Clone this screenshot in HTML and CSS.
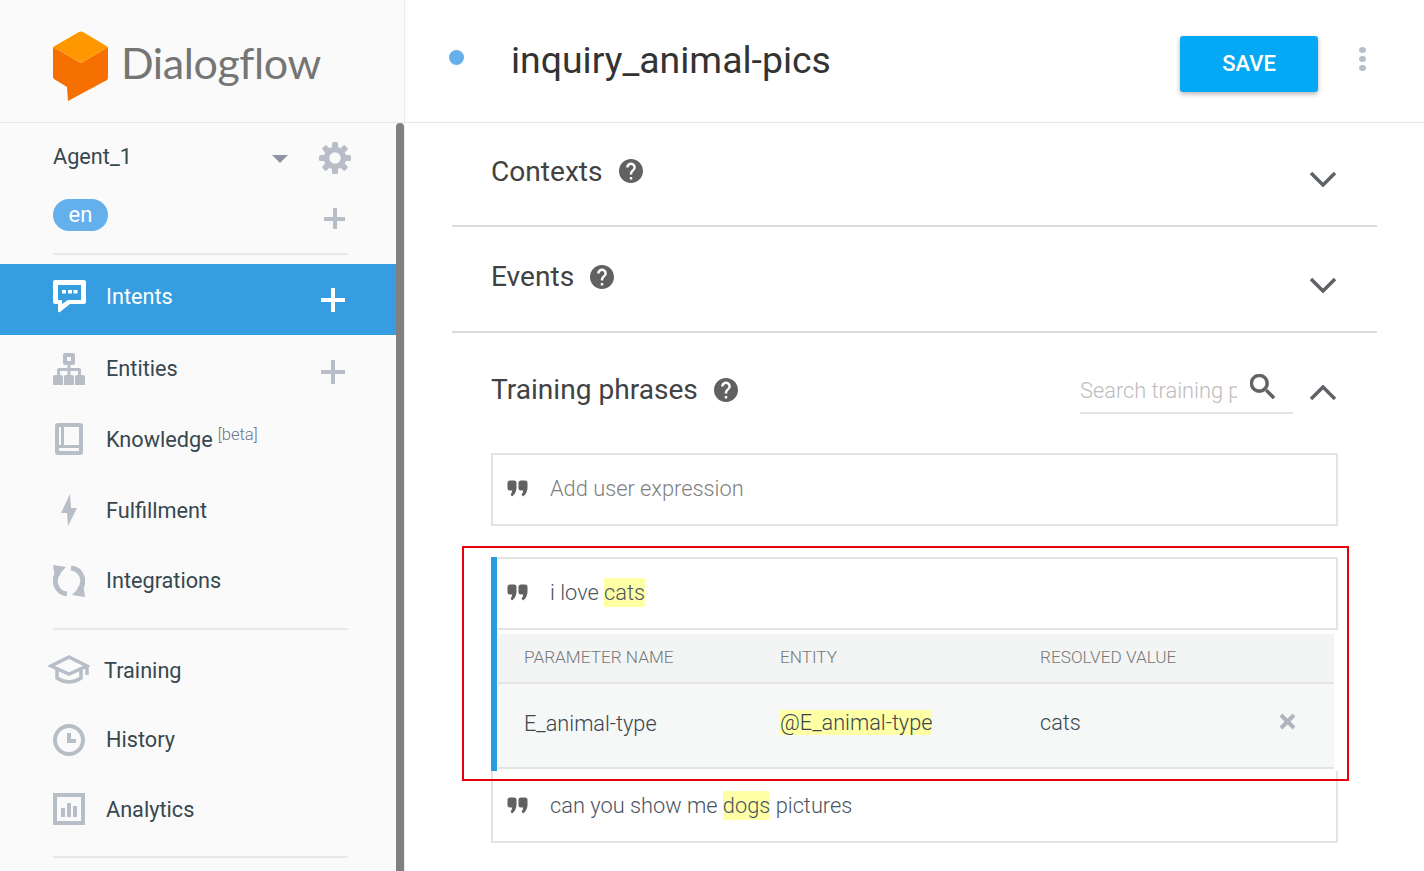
FILE: index.html
```html
<!DOCTYPE html>
<html lang="en">
<head>
    <meta charset="UTF-8">
    <meta name="viewport" content="width=device-width, initial-scale=1.0">
    <title>Dialogflow - inquiry_animal-pics</title>
    <link rel="stylesheet" href="styles.css">
</head>
<body>
    <aside class="sidebar">
        <div class="logo">
            <svg class="logo-mark" width="56" height="71" viewBox="0 0 56 71">
                <path fill="#f57000" d="M0 16 L28 32 L55 16 V47 Q55 48 54 49 L15 70 L14 56 L1 48 Q0 47 0 46 Z"/>
                <path fill="#ff9800" d="M26 1 Q28 0 30 1 L55 16 L28 32 L0 16 Z"/>
            </svg>
            <span class="logo-text">Dialogflow</span>
        </div>
        <div class="side-body">
            <div class="side-content">
                <div class="agent-row">
                    <span class="agent-name">Agent_1</span>
                    <span class="caret"></span>
                    <svg class="gear" width="32" height="32" viewBox="0 0 32 32">
                        <circle cx="16" cy="16" r="8.5"/>
                        <rect x="13" y="0" width="6" height="8" rx="1.5"/>
                        <rect x="13" y="0" width="6" height="8" rx="1.5" transform="rotate(45 16 16)"/>
                        <rect x="13" y="0" width="6" height="8" rx="1.5" transform="rotate(90 16 16)"/>
                        <rect x="13" y="0" width="6" height="8" rx="1.5" transform="rotate(135 16 16)"/>
                        <rect x="13" y="0" width="6" height="8" rx="1.5" transform="rotate(180 16 16)"/>
                        <rect x="13" y="0" width="6" height="8" rx="1.5" transform="rotate(225 16 16)"/>
                        <rect x="13" y="0" width="6" height="8" rx="1.5" transform="rotate(270 16 16)"/>
                        <rect x="13" y="0" width="6" height="8" rx="1.5" transform="rotate(315 16 16)"/>
                    </svg>
                </div>
                <div class="lang-row">
                    <span class="lang-pill">en</span>
                    <span class="plus plus-small"></span>
                </div>
                <div class="side-divider"></div>
                <nav class="nav">
                    <a class="nav-item active">
                        <svg class="nav-icon" width="33" height="33" viewBox="0 0 33 33"><path fill-rule="evenodd" d="M2 0 H31 Q33 0 33 2 V22 Q33 24 31 24 H17 L7 32 Q5 33 5 31 V24 H2 Q0 24 0 22 V2 Q0 0 2 0 Z M5 5 V20 H9 V24 L15 20 H28 V5 Z"/><rect x="9" y="10" width="4" height="3.5"/><rect x="15" y="10" width="4" height="3.5"/><rect x="20.5" y="10" width="4" height="3.5"/></svg>
                        <span>Intents</span>
                        <span class="plus"></span>
                    </a>
                    <a class="nav-item">
                        <svg class="nav-icon" width="32" height="32" viewBox="0 0 32 32"><path fill-rule="evenodd" d="M12 0 H20 Q22 0 22 2 V10 Q22 12 20 12 H17.5 V15 H26 Q28 15 28 17 V22 H30 Q32 22 32 24 V32 H22 V24 Q22 22 24 22 H25 V18 H17.5 V22 H19 Q21 22 21 24 V32 H11 V24 Q11 22 13 22 H14.5 V18 H7 V22 H8 Q10 22 10 24 V32 H0 V24 Q0 22 2 22 H4 V17 Q4 15 6 15 H14.5 V12 H12 Q10 12 10 10 V2 Q10 0 12 0 Z M14 4 V8 H18 V4 Z"/></svg>
                        <span>Entities</span>
                        <span class="plus"></span>
                    </a>
                    <a class="nav-item">
                        <svg class="nav-icon" width="32" height="32" viewBox="0 0 32 32"><path fill-rule="evenodd" d="M5 0 H27 Q30 0 30 3 V29 Q30 32 27 32 H5 Q2 32 2 29 V3 Q2 0 5 0 Z M6 4 V22 H8 V4 Z M11 4 V22 H26 V4 Z M6 25 V28 H26 V25 Z"/></svg>
                        <span>Knowledge</span><sup class="beta">[beta]</sup>
                    </a>
                    <a class="nav-item">
                        <svg class="nav-icon" width="32" height="32" viewBox="0 0 32 32"><path d="M17 0 L8 19 H14 L15 32 L24 14 H18 Z"/></svg>
                        <span>Fulfillment</span>
                    </a>
                    <a class="nav-item">
                        <svg class="nav-icon sync" width="32" height="32" viewBox="0 0 32 32"><path d="M6 7 A13 13 0 0 0 14 29"/><path d="M18 3 A13 13 0 0 1 26 25"/><path class="solid" d="M0 0 L13 2 L2 14 Z"/><path class="solid" d="M32 32 L19 30 L30 18 Z"/></svg>
                        <span>Integrations</span>
                    </a>
                </nav>
                <div class="side-divider divider-mid"></div>
                <nav class="nav nav-tools">
                    <a class="nav-item training">
                        <svg class="nav-icon hat" width="42" height="30" viewBox="0 0 42 30"><path d="M21 2 L39 11 L21 19 L3 11 Z"/><path d="M9 15 V23 Q21 31 33 23 V15"/><path d="M39 11 V20"/></svg>
                        <span>Training</span>
                    </a>
                    <a class="nav-item">
                        <svg class="nav-icon clock" width="32" height="32" viewBox="0 0 32 32"><circle cx="16" cy="16" r="14"/><path d="M16 9 V17 H23"/></svg>
                        <span>History</span>
                    </a>
                    <a class="nav-item">
                        <svg class="nav-icon" width="32" height="32" viewBox="0 0 32 32"><path fill-rule="evenodd" d="M0 0 H32 V32 H0 Z M4 4 V28 H28 V4 Z"/><rect x="8" y="15" width="4" height="9"/><rect x="14" y="10" width="4" height="14"/><rect x="20" y="13" width="4" height="11"/></svg>
                        <span>Analytics</span>
                    </a>
                </nav>
                <div class="side-divider divider-end"></div>
            </div>
            <div class="scrollbar"></div>
        </div>
    </aside>

    <main class="main">
        <header class="topbar">
            <span class="status-dot"></span>
            <h1>inquiry_animal-pics</h1>
            <button class="save" type="button">SAVE</button>
            <div class="more"><i></i><i></i><i></i></div>
        </header>

        <div class="content">
            <section class="section">
                <h2>Contexts</h2>
                <svg class="help" width="24" height="24" viewBox="2 2 20 20"><path d="M12 2C6.48 2 2 6.48 2 12s4.48 10 10 10 10-4.48 10-10S17.52 2 12 2zm1 17h-2v-2h2v2zm2.07-7.75l-.9.92C13.45 12.9 13 13.5 13 15h-2v-.5c0-1.1.45-2.1 1.17-2.83l1.24-1.26c.37-.36.59-.86.59-1.41 0-1.1-.9-2-2-2s-2 .9-2 2H8c0-2.21 1.79-4 4-4s4 1.79 4 4c0 .88-.36 1.68-.93 2.25z"/></svg>
                <svg class="chevron" width="28" height="16" viewBox="0 0 28 16"><path d="M2 2 L14 14 L26 2"/></svg>
            </section>
            <section class="section section-events">
                <h2>Events</h2>
                <svg class="help" width="24" height="24" viewBox="2 2 20 20"><path d="M12 2C6.48 2 2 6.48 2 12s4.48 10 10 10 10-4.48 10-10S17.52 2 12 2zm1 17h-2v-2h2v2zm2.07-7.75l-.9.92C13.45 12.9 13 13.5 13 15h-2v-.5c0-1.1.45-2.1 1.17-2.83l1.24-1.26c.37-.36.59-.86.59-1.41 0-1.1-.9-2-2-2s-2 .9-2 2H8c0-2.21 1.79-4 4-4s4 1.79 4 4c0 .88-.36 1.68-.93 2.25z"/></svg>
                <svg class="chevron" width="28" height="16" viewBox="0 0 28 16"><path d="M2 2 L14 14 L26 2"/></svg>
            </section>

            <section class="training-section">
                <div class="training-head">
                    <h2>Training phrases</h2>
                    <svg class="help" width="24" height="24" viewBox="2 2 20 20"><path d="M12 2C6.48 2 2 6.48 2 12s4.48 10 10 10 10-4.48 10-10S17.52 2 12 2zm1 17h-2v-2h2v2zm2.07-7.75l-.9.92C13.45 12.9 13 13.5 13 15h-2v-.5c0-1.1.45-2.1 1.17-2.83l1.24-1.26c.37-.36.59-.86.59-1.41 0-1.1-.9-2-2-2s-2 .9-2 2H8c0-2.21 1.79-4 4-4s4 1.79 4 4c0 .88-.36 1.68-.93 2.25z"/></svg>
                    <div class="search">
                        <span class="search-text">Search training phrases</span>
                        <svg class="search-icon" width="25" height="25" viewBox="3 3 17.5 17.5"><path d="M15.5 14h-.79l-.28-.27C15.41 12.59 16 11.11 16 9.5 16 5.91 13.09 3 9.5 3S3 5.91 3 9.5 5.91 16 9.5 16c1.61 0 3.09-.59 4.23-1.57l.27.28v.79l5 4.99L20.49 19l-4.99-5zm-6 0C7.01 14 5 11.99 5 9.5S7.01 5 9.5 5 14 7.01 14 9.5 11.99 14 9.5 14z"/></svg>
                    </div>
                    <svg class="chevron chevron-up" width="28" height="16" viewBox="0 0 28 16"><path d="M2 14 L14 2 L26 14"/></svg>
                </div>

                <div class="phrase add-phrase">
                    <svg class="quote" width="21" height="17" viewBox="0 0 21 17"><path d="M0.5 3 Q0.5 0.5 3 0.5 H7 Q9.5 0.5 9.5 3 V8 Q9.5 13 5 16.5 L3.5 14.5 Q5 13 5.2 10.5 H3 Q0.5 10.5 0.5 8 Z M11.5 3 Q11.5 0.5 14 0.5 H18 Q20.5 0.5 20.5 3 V8 Q20.5 13 16 16.5 L14.5 14.5 Q16 13 16.2 10.5 H14 Q11.5 10.5 11.5 8 Z"/></svg>
                    <span class="placeholder">Add user expression</span>
                </div>

                <div class="phrase-group">
                    <div class="phrase-selected">
                        <svg class="quote" width="21" height="17" viewBox="0 0 21 17"><path d="M0.5 3 Q0.5 0.5 3 0.5 H7 Q9.5 0.5 9.5 3 V8 Q9.5 13 5 16.5 L3.5 14.5 Q5 13 5.2 10.5 H3 Q0.5 10.5 0.5 8 Z M11.5 3 Q11.5 0.5 14 0.5 H18 Q20.5 0.5 20.5 3 V8 Q20.5 13 16 16.5 L14.5 14.5 Q16 13 16.2 10.5 H14 Q11.5 10.5 11.5 8 Z"/></svg>
                        <span class="phrase-text">i love <mark>cats</mark></span>
                    </div>
                    <div class="params">
                        <div class="params-row params-head">
                            <span>PARAMETER NAME</span>
                            <span>ENTITY</span>
                            <span>RESOLVED VALUE</span>
                        </div>
                        <div class="params-row params-body">
                            <span class="param-name">E_animal-type</span>
                            <span class="param-entity"><mark>@E_animal-type</mark></span>
                            <span class="param-value">cats</span>
                            <svg class="remove" width="19" height="19" viewBox="0 0 19 19"><path d="M3 3 L16 16 M16 3 L3 16"/></svg>
                        </div>
                    </div>
                </div>

                <div class="phrase last-phrase">
                    <svg class="quote" width="21" height="17" viewBox="0 0 21 17"><path d="M0.5 3 Q0.5 0.5 3 0.5 H7 Q9.5 0.5 9.5 3 V8 Q9.5 13 5 16.5 L3.5 14.5 Q5 13 5.2 10.5 H3 Q0.5 10.5 0.5 8 Z M11.5 3 Q11.5 0.5 14 0.5 H18 Q20.5 0.5 20.5 3 V8 Q20.5 13 16 16.5 L14.5 14.5 Q16 13 16.2 10.5 H14 Q11.5 10.5 11.5 8 Z"/></svg>
                    <span class="phrase-text">can you show me <mark>dogs</mark> pictures</span>
                </div>
            </section>
        </div>

        <!-- red box drawn over the screenshot -->
        <div class="callout"></div>
    </main>
</body>
</html>
```

FILE: styles.css
```css
* {
    box-sizing: border-box;
    margin: 0;
    padding: 0;
}

html,
body {
    height: 100%;
    overflow: hidden;
}

body {
    font-family: 'Roboto', 'Liberation Sans', sans-serif;
    display: flex;
    background: #fff;
    color: #37474f;
}

mark {
    background: #ffffa6;
    color: inherit;
}

/* Sidebar */
.sidebar {
    width: 405px;
    flex-shrink: 0;
    display: flex;
    flex-direction: column;
    background: #fafafa;
    border-right: 1px solid #ececec;
}

.logo {
    height: 123px;
    flex-shrink: 0;
    display: flex;
    align-items: flex-start;
    padding: 31px 0 0 53px;
    border-bottom: 1px solid #e6e6e6;
}

.logo-text {
    font-family: 'Lato', 'Roboto', sans-serif;
    font-size: 43px;
    line-height: 64px;
    letter-spacing: -0.4px;
    color: #757575;
    margin-left: 12px;
}

.side-body {
    flex: 1;
    display: flex;
    min-height: 0;
}

.side-content {
    width: 396px;
    flex-shrink: 0;
}

.scrollbar {
    width: 8px;
    background: #808080;
    border-radius: 4px 4px 0 0;
}

.agent-row {
    height: 67px;
    display: flex;
    align-items: center;
    padding: 0 45px 0 53px;
}

.agent-name {
    font-size: 21.7px;
    color: #37474f;
}

.caret {
    width: 0;
    height: 0;
    margin: 4px 31px 0 auto;
    border-left: 8px solid transparent;
    border-right: 8px solid transparent;
    border-top: 8px solid #8e94a6;
}

.gear {
    margin-top: 2px;
    fill: none;
    stroke: none;
}

.gear circle {
    stroke: #b8bec8;
    stroke-width: 5.5;
}

.gear rect {
    fill: #b8bec8;
}

.lang-row {
    height: 63px;
    display: flex;
    align-items: flex-start;
    justify-content: space-between;
    padding: 9px 51px 0 53px;
}

.lang-pill {
    width: 55px;
    height: 32px;
    border-radius: 16px;
    background: #64b0ec;
    color: #fff;
    font-size: 22px;
    line-height: 31px;
    text-align: center;
}

.plus {
    width: 24px;
    height: 24px;
    margin-left: auto;
    margin-right: 51px;
    margin-top: 6px;
    background:
        linear-gradient(#b8bec8, #b8bec8) center / 100% 4px no-repeat,
        linear-gradient(#b8bec8, #b8bec8) center / 4px 100% no-repeat;
}

.plus-small {
    width: 21px;
    height: 21px;
    margin: 9px 0 0 0;
}

.side-divider {
    height: 2px;
    margin: 0 48px 0 53px;
    background: #e8e8e8;
}

.divider-mid {
    margin-top: 11px;
}

.divider-end {
    margin-top: 12px;
}

.nav {
    display: flex;
    flex-direction: column;
}

.side-divider + .nav {
    margin-top: 9px;
}

.side-divider + .nav-tools {
    margin-top: 6px;
}

.nav-item {
    height: 70.6px;
    display: flex;
    align-items: center;
    padding-left: 53px;
    padding-bottom: 2px;
    font-size: 21.7px;
    color: #37474f;
}

.nav-tools .nav-item {
    height: 69.5px;
    padding-bottom: 1px;
}

.nav-icon {
    width: 32px;
    flex-shrink: 0;
    margin-right: 21px;
    fill: #b8bec8;
}

.nav-item.active {
    padding-bottom: 6px;
    background: #369ee0;
    color: #fff;
}

.active .nav-icon {
    width: 33px;
    margin-right: 20px;
    fill: #fff;
}

.active .plus {
    margin-top: 8px;
    background:
        linear-gradient(#fff, #fff) center / 100% 4px no-repeat,
        linear-gradient(#fff, #fff) center / 4px 100% no-repeat;
}

.beta {
    font-size: 16.6px;
    font-weight: 300;
    color: #6f7583;
    margin-left: 5px;
    align-self: flex-start;
    margin-top: 21px;
    line-height: 18px;
}

.sync {
    fill: none;
    stroke: #b8bec8;
    stroke-width: 5;
}

.sync .solid {
    fill: #b8bec8;
    stroke: none;
}

.nav-tools .training {
    padding-left: 48px;
}

.hat {
    width: 42px;
    margin-right: 14px;
    fill: none;
    stroke: #b8bec8;
    stroke-width: 3.5;
}

.clock {
    fill: none;
    stroke: #b8bec8;
    stroke-width: 4;
}

/* Main */
.main {
    flex: 1;
    position: relative;
    min-width: 0;
    display: flex;
    flex-direction: column;
}

.topbar {
    height: 123px;
    flex-shrink: 0;
    display: flex;
    align-items: flex-start;
    padding: 0 58px 0 44px;
    border-bottom: 1px solid #e8e8e8;
}

.status-dot {
    width: 15px;
    height: 15px;
    margin-top: 50px;
    border-radius: 50%;
    background: #64b0ec;
}

h1 {
    font-size: 37.4px;
    font-weight: 400;
    line-height: 44px;
    margin: 38px 0 0 47px;
    color: #333;
}

.save {
    width: 138px;
    height: 56px;
    margin: 36px 0 0 auto;
    padding-bottom: 2px;
    font-family: inherit;
    font-size: 22px;
    font-weight: 500;
    color: #fff;
    background: #03a9f4;
    border: none;
    border-radius: 3px;
    box-shadow: 0 2px 5px rgba(0, 0, 0, 0.3);
}

.more {
    display: flex;
    flex-direction: column;
    gap: 3px;
    margin: 47px 0 0 41px;
}

.more i {
    display: block;
    width: 7px;
    height: 6px;
    border-radius: 50%;
    background: #b8bec8;
}

.content {
    flex: 1;
    padding: 0 47px 0 47px;
    overflow: hidden;
}

.section {
    height: 106px;
    display: flex;
    align-items: flex-start;
    padding: 0 40px 0 39px;
    border-bottom: 2px solid #dcdcdc;
}

.section:first-child {
    height: 104px;
}

.section:first-child h2 {
    margin-top: 29px;
}

.section-events {
    padding-top: 2px;
}

h2 {
    font-size: 28.1px;
    font-weight: 400;
    color: #424242;
    line-height: 40px;
    margin-top: 28px;
}

.help {
    fill: #616161;
    margin: 36px 0 0 16px;
    flex-shrink: 0;
}

.chevron {
    margin: 48px 0 0 auto;
    fill: none;
    stroke: #5f6368;
    stroke-width: 3.5;
}

.training-section {
    padding: 0 39px 0 39px;
}

.training-head {
    height: 120px;
    display: flex;
    align-items: flex-start;
}

.training-head h2 {
    margin-top: 37px;
}

.training-head .help {
    margin-top: 45px;
}

.search {
    width: 213px;
    height: 40px;
    margin: 41px 16px 0 auto;
    display: flex;
    align-items: flex-start;
    border-bottom: 2px solid #e4e4e4;
}

.search-text {
    width: 157px;
    overflow: hidden;
    white-space: nowrap;
    font-size: 21.8px;
    line-height: 34px;
    color: #bdbdbd;
    font-weight: 300;
}

.search-icon {
    fill: #616161;
    stroke: #616161;
    stroke-width: 0.5;
    margin-left: 13px;
}

.chevron-up {
    margin: 52px 1px 0 0;
}

.phrase {
    display: flex;
    align-items: center;
    height: 73px;
    padding-left: 14px;
    padding-bottom: 2px;
    border: 2px solid #e4e4e4;
}

.quote {
    fill: #616161;
    margin-right: 22px;
    flex-shrink: 0;
}

.placeholder {
    font-size: 21.8px;
    font-weight: 300;
    color: #808080;
}

.phrase-text {
    font-size: 21.8px;
    font-weight: 300;
    color: #4a5560;
}

.phrase-text mark {
    padding: 2px 0;
}

.phrase-group {
    margin-top: 31px;
    height: 214px;
    border-left: 6px solid #2b9be0;
    display: flex;
    flex-direction: column;
}

.phrase-selected {
    height: 73px;
    display: flex;
    align-items: center;
    padding-left: 10px;
    padding-bottom: 2px;
    border: 2px solid #e4e4e4;
    border-left: none;
}

.params {
    margin: 4px 4px 0 1px;
    background: #f6f7f7;
    border-bottom: 2px solid #e4e4e4;
}

.params-row {
    display: flex;
    align-items: center;
    padding-left: 26px;
}

.params-row > span:nth-child(1) {
    width: 256px;
}

.params-row > span:nth-child(2) {
    width: 260px;
}

.params-head {
    height: 50px;
    padding-bottom: 2px;
    font-size: 17.2px;
    font-weight: 300;
    color: #777;
    background: #f3f4f4;
    border-bottom: 2px solid #e4e4e4;
}

.params-body {
    height: 83px;
    font-size: 21.7px;
    font-weight: 300;
    color: #37474f;
}

.param-name {
    margin-top: -5px;
}

.param-entity,
.param-value {
    margin-top: -7px;
}

.remove {
    margin-left: auto;
    margin-right: 37px;
    margin-top: -8px;
    fill: none;
    stroke: #b0b5bd;
    stroke-width: 4;
}

.last-phrase {
    border-top: none;
    height: 72px;
}

/* annotation box, sits over the phrases */
.callout {
    position: absolute;
    left: 57px;
    top: 546px;
    width: 887px;
    height: 235px;
    border: 2px solid #e8000d;
    pointer-events: none;
}
```
